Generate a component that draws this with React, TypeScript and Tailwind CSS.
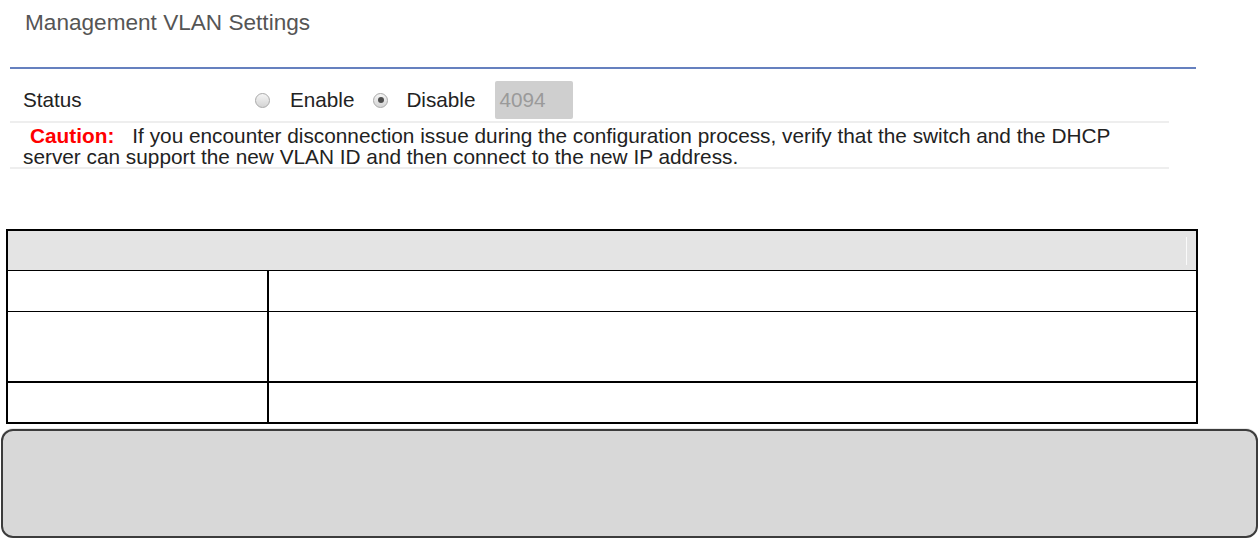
import React from "react";

function Radio({ checked = false }: { checked?: boolean }) {
  return (
    <span className="flex h-[15px] w-[15px] shrink-0 items-center justify-center rounded-full border border-[#a9a9a9] bg-gradient-to-b from-[#f5f5f5] to-[#d4d4d4]">
      {checked && <span className="h-[6px] w-[6px] rounded-full bg-[#4d4d4d]" />}
    </span>
  );
}

const rows = [
  { h: "h-[41px]", thick: false },
  { h: "h-[70px]", thick: false },
  { h: "h-[41px]", thick: true },
];

export default function App() {
  return (
    <div className="h-[538px] w-[1260px] overflow-hidden bg-white text-[#222]" style={{ fontFamily: '"Liberation Sans", Arial, sans-serif' }}>
      {/* page heading */}
      <div className="h-[67px] pl-[25px] pt-[9px]">
        <h1 className="text-[22.6px] leading-[28px] text-[#555]">Management VLAN Settings</h1>
      </div>
      <div className="ml-[10px] h-[2px] w-[1186px] bg-[#6580bf]" />

      {/* status row */}
      <div className="pb-[2px] pl-[23px] pt-[12px]">
        <div className="flex h-[38px] items-center text-[20.7px] leading-[24px] text-[#222]">
          <span className="w-[232px]">Status</span>
          <Radio />
          <span className="ml-[20px]">Enable</span>
          <span className="ml-[19px]">
            <Radio checked />
          </span>
          <span className="ml-[18px]">Disable</span>
          <div className="ml-[20px] flex h-[38px] w-[78px] items-center rounded-[2px] bg-[#cfcfcf] pl-[4px] text-[#9a9a9a]">4094</div>
        </div>
      </div>
      <div className="ml-[10px] h-[2px] w-[1159px] bg-[#eeeeee]" />

      <p className="pl-[23px] pt-[2px] text-[20.8px] leading-[21px] text-[#222]">
        <span className="ml-[7px] mr-[18px] font-bold text-[#ff0000]">Caution:</span>
        If you encounter disconnection issue during the configuration process, verify that the switch and the DHCP
        <br />
        server can support the new VLAN ID and then connect to the new IP address.
      </p>
      <div className="ml-[10px] h-[2px] w-[1159px] bg-[#eeeeee]" />

      {/* description table */}
      <div className="ml-[6px] mt-[60px] w-[1192px] border-2 border-black">
        <div className="flex h-[39px] items-center justify-end bg-[#e4e4e4] pr-[9px]">
          <div className="h-[28px] w-px bg-white/80" />
        </div>
        {rows.map((row, i) => (
          <div key={i} className={`grid grid-cols-[261px_1fr] border-black ${row.thick ? "border-t-2" : "border-t-[1.5px]"} ${row.h}`}>
            <div className="border-r-2 border-black" />
            <div />
          </div>
        ))}
      </div>

      {/* note box */}
      <div className="ml-[1px] mt-[5px] h-[109px] w-[1257px] rounded-[12px] border-2 border-[#3c3c3c] bg-[#d8d8d8] shadow-[0_-1px_0_#e8e8e8]" />
    </div>
  );
}
